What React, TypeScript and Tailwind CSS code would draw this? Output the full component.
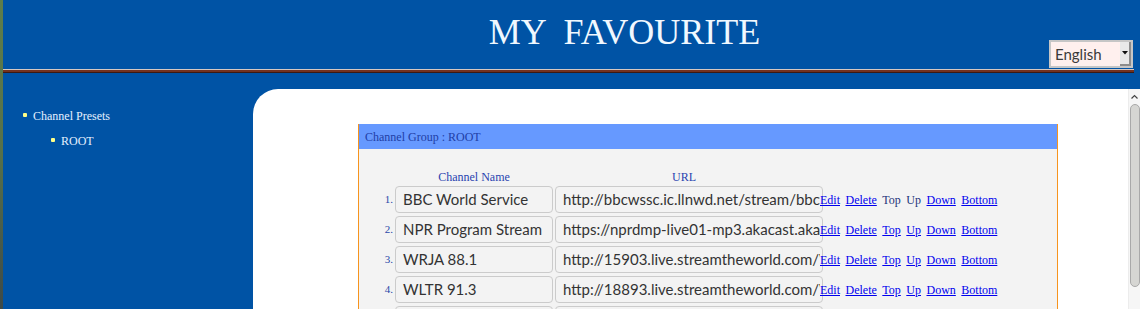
import React from "react"

const serif = { fontFamily: '"Liberation Serif", "Times New Roman", serif' }
const sans = { fontFamily: 'Lato, "Noto Sans", sans-serif' }

const channels = [
  { name: "BBC World Service", url: "http://bbcwssc.ic.llnwd.net/stream/bbcwssc_mp1_ws-eieuk" },
  { name: "NPR Program Stream", url: "https://nprdmp-live01-mp3.akacast.akamaistream.net/7/998/364916/v1/npr.akacast.akamaistream.net/nprdmp_live01_mp3" },
  { name: "WRJA 88.1", url: "http://15903.live.streamtheworld.com/WRJAFM.mp3" },
  { name: "WLTR 91.3", url: "http://18893.live.streamtheworld.com/WLTRFM.mp3" },
  { name: "WEPR 90.1", url: "http://18893.live.streamtheworld.com/WEPRFM.mp3" },
]

function Sidebar() {
  return (
    <div className="w-[250px] shrink-0 pt-[19px] text-[12px] leading-[16px] text-[#e4f0ff]" style={serif}>
      <div className="flex items-center pl-[20px]">
        <span className="w-[4px] h-[4px] rounded-[1px] bg-[#ffff88] mr-[6px] -mt-[2px]" />
        Channel Presets
      </div>
      <div className="flex items-center pl-[48px] mt-[9px]">
        <span className="w-[4px] h-[4px] rounded-[1px] bg-[#ffff88] mr-[6px] -mt-[2px]" />
        ROOT
      </div>
    </div>
  )
}

function Links({ first }: { first: boolean }) {
  const link = "text-[#0000ee] underline"
  const plain = "text-[#23337a]"
  return (
    <div className="flex gap-[5.5px] -ml-[3px] text-[12px] leading-[16px]" style={serif}>
      <span className={link}>Edit</span>
      <span className={link}>Delete</span>
      <span className={first ? plain : link}>Top</span>
      <span className={first ? plain : link}>Up</span>
      <span className={link}>Down</span>
      <span className={link}>Bottom</span>
    </div>
  )
}

function ChannelTable() {
  return (
    <div className="w-[700px] border-x border-[#f7941e] bg-[#f3f3f3] h-[200px]">
      <div className="h-[25px] bg-[#6699ff] flex items-center pl-[6px] text-[12px] text-[#1f3ea6]" style={serif}>
        Channel Group : ROOT
      </div>
      <div className="pt-[20px]">
        <div className="flex h-[16px] mb-[1px] pl-[36px] text-[12px] leading-[16px] text-[#2a44b0]" style={serif}>
          <div className="w-[158px] text-center">Channel Name</div>
          <div className="w-[268px] ml-[2px] text-center pr-[10px]">URL</div>
        </div>
        <div className="flex flex-col gap-[3px]">
          {channels.map((c, i) => (
            <div key={c.name} className="flex items-center h-[27px]">
              <div className="w-[36px] pr-[2px] text-right text-[11px] text-[#2848a8]" style={serif}>
                {i + 1}.
              </div>
              <div
                className="w-[158px] h-[27px] border border-[#cbcbcb] rounded-[4px] bg-[#f3f3f3] pl-[7px] flex items-center overflow-hidden whitespace-nowrap text-[15px] text-[#333]"
                style={sans}
              >
                {c.name}
              </div>
              <div
                className="w-[268px] h-[27px] ml-[2px] border border-[#cbcbcb] rounded-[4px] bg-[#f3f3f3] pl-[7px] pr-[2px] flex items-center overflow-hidden whitespace-nowrap text-[15px] text-[#333]"
                style={sans}
              >
                <span className="overflow-hidden">{c.url}</span>
              </div>
              <Links first={i === 0} />
            </div>
          ))}
        </div>
      </div>
    </div>
  )
}

function Scrollbar() {
  return (
    <div className="w-[12px] shrink-0 bg-[#f6f6f6] border-l border-[#ececec] flex flex-col items-center">
      <svg width="9" height="6" viewBox="0 0 9 6" className="mt-[5px]">
        <path d="M1.5 4.5 L4.5 1.5 L7.5 4.5" fill="none" stroke="#444" strokeWidth="1.2" />
      </svg>
      <div className="mt-[4px] w-[10px] h-[183px] rounded-[5px] bg-[#d6d6d3] border border-[#a9a9a9]" />
    </div>
  )
}

export default function App() {
  return (
    <div className="w-[1140px] h-[309px] overflow-hidden flex bg-[#0053a5]">
      <div className="w-[3px] shrink-0 bg-gradient-to-b from-[#5d7d4b] via-[#56704a] to-[#3e4a48]" />
      <div className="flex-1 flex flex-col">
        <div className="relative h-[69px] shrink-0 pl-[106px] text-center">
          <h1 className="pt-[12px] text-[36px] leading-[40px] text-[#f0f8ff] whitespace-pre" style={serif}>
            MY  FAVOURITE
          </h1>
          <div className="absolute right-[7px] top-[40px] w-[84px] h-[28px] border-2 border-[#c6c6c6] bg-[#fff0ee] flex items-center">
            <span className="flex-1 pl-[4px] text-left text-[15px] text-[#3a3a3a]" style={sans}>
              English
            </span>
            <div className="w-[11px] h-[24px] bg-[#e8e8e8] border-r-2 border-b-2 border-[#8c8c8c] flex items-center justify-center">
              <svg width="6" height="4" viewBox="0 0 6 4">
                <path d="M0 0 L6 0 L3 3.5 Z" fill="#111" />
              </svg>
            </div>
          </div>
        </div>
        <div className="mr-[6px] shrink-0">
          <div className="h-px bg-[#d6c8c2]" />
          <div className="h-[2px] bg-[#73321f]" />
          <div className="h-px bg-[#3c1a12]" />
        </div>
        <div className="flex flex-1 pt-[16px]">
          <Sidebar />
          <div className="flex-1 flex bg-white rounded-tl-[25px]">
            <div className="flex-1 pl-[105px] pt-[35px]">
              <ChannelTable />
            </div>
            <Scrollbar />
          </div>
        </div>
      </div>
    </div>
  )
}
